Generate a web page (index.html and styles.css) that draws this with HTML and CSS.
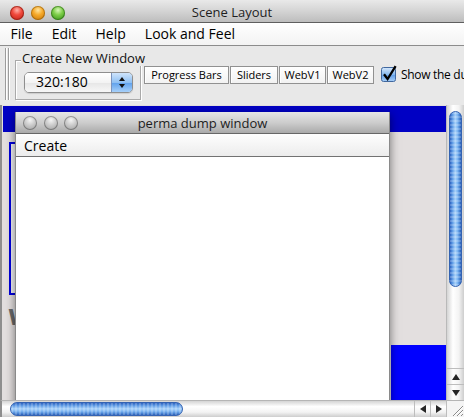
FILE: index.html
```html
<!DOCTYPE html>
<html>
<head>
<meta charset="utf-8">
<title>Scene Layout</title>
<link rel="stylesheet" href="styles.css">
</head>
<body>
<div class="app">
  <div class="titlebar">
    <div class="lights">
      <span class="light red"></span><span class="light yellow"></span><span class="light green"></span>
    </div>
    <div class="title">Scene Layout</div>
  </div>
  <div class="menubar">
    <span class="menu">File</span><span class="menu">Edit</span><span class="menu">Help</span><span class="menu">Look and Feel</span>
  </div>
  <div class="toolbar">
    <div class="grip"></div>
    <div class="group">
      <span class="group-title">Create New Window</span>
      <div class="combo">
        <span class="combo-text">320:180</span>
        <span class="combo-arrows"><span class="tri-up"></span><span class="tri-down"></span></span>
      </div>
    </div>
    <div class="buttons">
      <span class="btn b-progress">Progress Bars</span>
      <span class="btn b-sliders">Sliders</span>
      <span class="btn b-web">WebV1</span>
      <span class="btn b-web">WebV2</span>
    </div>
    <span class="check">
      <svg width="17" height="17" viewBox="0 0 17 17">
        <defs>
          <linearGradient id="cb" x1="0" y1="0" x2="0" y2="1">
            <stop offset="0" stop-color="#d7e8fb"/>
            <stop offset="0.5" stop-color="#86b9ef"/>
            <stop offset="0.51" stop-color="#5f9ce6"/>
            <stop offset="1" stop-color="#a9d0f8"/>
          </linearGradient>
        </defs>
        <rect x="0.5" y="2.5" width="14" height="14" rx="2" fill="url(#cb)" stroke="#41689f"/>
        <path d="M3 9.2 L6.6 14 L14.6 1.2" fill="none" stroke="#000" stroke-width="2.3" stroke-linejoin="miter"/>
      </svg>
    </span>
    <span class="check-label">Show the dump window</span>
  </div>
  <div class="desktop">
    <div class="viewport">
      <div class="edge"></div>
      <div class="bluebar"></div>
      <div class="blueframe"></div>
      <div class="ghost-w">W</div>
      <div class="blue-bottom"></div>
      <div class="perma">
        <div class="p-titlebar">
          <div class="p-lights"><span class="plight"></span><span class="plight"></span><span class="plight"></span></div>
          <div class="p-title">perma dump window</div>
        </div>
        <div class="p-menubar"><span class="p-menu">Create</span></div>
        <div class="p-content"></div>
      </div>
    </div>
    <div class="vscroll">
      <div class="vthumb"></div>
      <div class="vspace"></div>
      <div class="varrow"><span class="tri-up dark"></span></div>
      <div class="varrow"><span class="tri-down dark"></span></div>
    </div>
    <div class="hscroll">
      <div class="htrack"><div class="hthumb"></div></div>
      <div class="harrow"><span class="tri-left"></span></div>
      <div class="harrow"><span class="tri-right"></span></div>
    </div>
    <div class="corner">
      <svg width="18" height="17" viewBox="0 0 18 17">
        <path d="M6 16 L16 6 M10 16 L16 10 M14 16 L16 14" stroke="#8a8a8a" stroke-width="1"/>
        <path d="M7 16 L16 7 M11 16 L16 11" stroke="#fff" stroke-width="1"/>
      </svg>
    </div>
  </div>
</div>
</body>
</html>
```

FILE: styles.css
```css
* { box-sizing: border-box; margin: 0; padding: 0; }
html, body { width: 464px; height: 417px; overflow: hidden; }
body {
  font-family: "Open Sans", "DejaVu Sans", sans-serif;
  color: #000;
  background: #e8e8e8;
}
.app { display: flex; flex-direction: column; width: 464px; height: 417px; }

/* outer title bar */
.titlebar {
  height: 23px;
  flex: none;
  display: grid;
  border-bottom: 1px solid #5f5f5f;
  background: linear-gradient(#e9e9e9, #d4d4d4 50%, #bdbdbd);
}
.titlebar > * { grid-area: 1 / 1; }
.lights { display: flex; gap: 6.5px; padding: 6px 0 0 10px; align-self: start; }
.light { width: 14px; height: 14px; border-radius: 50%; }
.red { background: radial-gradient(circle at 50% 30%, #ffb0a8 0, #f0493c 40%, #b81d12 100%); box-shadow: inset 0 0 0 1px rgba(120,20,10,.55); }
.yellow { background: radial-gradient(circle at 50% 30%, #ffe6a0 0, #f6a92a 40%, #c57204 100%); box-shadow: inset 0 0 0 1px rgba(130,80,0,.5); }
.green { background: radial-gradient(circle at 50% 30%, #d8f8b8 0, #7ccd48 40%, #2f8a14 100%); box-shadow: inset 0 0 0 1px rgba(30,90,10,.5); }
.title { text-align: center; font-size: 13px; line-height: 21px; padding-top: 2px; color: #1e1e1e; }

/* menu bar */
.menubar {
  height: 23px;
  flex: none;
  padding-left: 1px;
  border-bottom: 1px solid #8c8c8c;
  background: linear-gradient(#ffffff, #f3f3f3);
  display: flex;
  white-space: nowrap;
}
.menu { font-size: 14px; line-height: 21px; padding: 0 9.5px; }

/* toolbar */
.toolbar {
  height: 59px;
  flex: none;
  display: flex;
  align-items: flex-start;
  white-space: nowrap;
  overflow: hidden;
  background: #e8e8e8;
}
.toolbar > * { flex: none; }
.grip {
  margin: 2px 0 0 5px;
  width: 5px;
  height: 52px;
  background: linear-gradient(to right, #9c9c9c 0 1px, #fff 1px 2px, transparent 2px 3px, #9c9c9c 3px 4px, #fff 4px 5px);
}
.group {
  position: relative;
  margin: 14px 0 0 5px;
  width: 126px;
  height: 40px;
  border: 1px solid #a9a9a9;
  box-shadow: inset 1px 1px 0 #fff, 1px 1px 0 #fff;
}
.group-title {
  position: absolute;
  top: -11px;
  left: 5px;
  padding: 0 1px;
  font-size: 13px;
  line-height: 16px;
  background: #e8e8e8;
  color: #111;
}
.combo {
  margin: 11px 0 0 8px;
  width: 109px;
  height: 21px;
  display: flex;
  border: 1px solid #8e8e8e;
  border-radius: 5px;
  overflow: hidden;
  box-shadow: 0 1px 1px rgba(0,0,0,.12);
}
.combo-text {
  flex: 1;
  padding-left: 11px;
  font-size: 14px;
  line-height: 16px;
  padding-top: 1px;
  background: linear-gradient(#ffffff, #f3f3f3 50%, #e6e6e6 52%, #f7f7f7);
}
.combo-arrows {
  width: 21px;
  flex: none;
  display: flex;
  flex-direction: column;
  align-items: center;
  justify-content: center;
  gap: 3px;
  border-left: 1px solid #7b93bd;
  background: linear-gradient(#cfe4fb, #8fc0f3 50%, #5fa1ec 52%, #a7d0fa);
}
.tri-up { width: 0; height: 0; border-left: 3px solid transparent; border-right: 3px solid transparent; border-bottom: 4px solid #111; }
.tri-down { width: 0; height: 0; border-left: 3px solid transparent; border-right: 3px solid transparent; border-top: 4px solid #111; }
.tri-up.dark { border-left-width: 4px; border-right-width: 4px; border-bottom-width: 6px; border-bottom-color: #262626; }
.tri-down.dark { border-left-width: 4px; border-right-width: 4px; border-top-width: 6px; border-top-color: #262626; }
.tri-left { width: 0; height: 0; border-top: 4px solid transparent; border-bottom: 4px solid transparent; border-right: 6px solid #262626; }
.tri-right { width: 0; height: 0; border-top: 4px solid transparent; border-bottom: 4px solid transparent; border-left: 6px solid #262626; }

.buttons { display: flex; gap: 1px; margin: 20px 0 0 3px; }
.btn {
  display: block;
  flex: none;
  height: 18px;
  font-size: 11px;
  line-height: 16px;
  text-align: center;
  border: 1px solid #919191;
  background: linear-gradient(#ffffff, #f2f2f2);
  box-shadow: inset 1px 1px 0 #fff;
}
.b-progress { width: 85px; }
.b-sliders { width: 48px; }
.b-web { width: 47px; }
.check { margin: 19px 0 0 7px; width: 17px; height: 17px; }
.check svg { display: block; }
.check-label { margin: 21px 0 0 3px; font-size: 12px; letter-spacing: -0.3px; line-height: 16px; }

/* desktop area */
.desktop {
  flex: 1;
  display: grid;
  grid-template-columns: 446px 18px;
  grid-template-rows: 295px 17px;
}
.viewport { position: relative; overflow: hidden; background: #e3dfdf; }
.edge { position: absolute; left: 0; top: 0; bottom: 0; width: 2px; background: #8e8e8e; }
.bluebar { position: absolute; left: 3px; top: 1px; right: 0; height: 26px; background: #0000c4; }
.blueframe {
  position: absolute;
  left: 9px; top: 37px;
  width: 60px; height: 153px;
  border: 2px solid #0000de;
  background: #f3f3f3;
}
.ghost-w {
  position: absolute;
  left: 8px; top: 202px;
  font: bold 22px/22px "DejaVu Sans", sans-serif;
  color: #6a6a6a;
}
.blue-bottom { position: absolute; left: 391px; top: 240px; right: 0; height: 55px; background: #0000ff; }

.perma {
  position: absolute;
  left: 15px; top: 7px;
  width: 375px; height: 320px;
  display: flex;
  flex-direction: column;
  background: #fff;
  border-left: 1px solid #8a8a8a;
  border-right: 1px solid #8a8a8a;
  box-shadow: 0 3px 9px rgba(0,0,0,.5);
}
.p-titlebar {
  height: 22px;
  flex: none;
  display: grid;
  border-bottom: 1px solid #676767;
  background: linear-gradient(#e6e6e6, #cdcdcd 50%, #aaaaaa);
}
.p-titlebar > * { grid-area: 1 / 1; }
.p-lights { display: flex; gap: 6.5px; padding: 4px 0 0 7px; align-self: start; }
.plight {
  width: 14px; height: 14px; border-radius: 50%;
  background: radial-gradient(circle at 50% 30%, #f4f4f4 0, #c9c9c9 45%, #9a9a9a 100%);
  box-shadow: inset 0 0 0 1px rgba(0,0,0,.3);
}
.p-title { text-align: center; font-size: 13px; line-height: 19px; padding-top: 2px; color: #1e1e1e; }
.p-menubar {
  height: 23px;
  flex: none;
  border-bottom: 1px solid #727272;
  background: linear-gradient(#fefefe, #ececec);
}
.p-menu { display: inline-block; font-size: 14px; line-height: 22px; padding-left: 8px; }
.p-content { flex: 1; background: #fff; }

/* scrollbars */
.vscroll {
  display: flex;
  flex-direction: column;
  border-left: 1px solid #b9b9b9;
  background: linear-gradient(to right, #d4d4d4, #ffffff 35%, #f3f3f3 70%, #cdcdcd);
}
.vthumb {
  flex: none;
  margin: 6px 0 0 2px;
  width: 13px;
  height: 176px;
  border-radius: 7px;
  border: 1px solid #3463b2;
  background:
    repeating-linear-gradient(to bottom, rgba(255,255,255,.2) 0 2px, rgba(255,255,255,0) 2px 4px),
    linear-gradient(to right, #2d62bf, #5d9ae5 22%, #a9d2fa 48%, #7db5f1 68%, #4a87d6 86%, #2c5fb6);
}
.vspace { flex: 1; }
.varrow {
  flex: none;
  height: 16px;
  display: flex;
  align-items: center;
  justify-content: center;
  border-top: 1px solid #bdbdbd;
}
.hscroll {
  display: flex;
  border-top: 1px solid #b5b5b5;
  border-left: 2px solid #8e8e8e;
  background: linear-gradient(#d4d4d4, #ffffff 35%, #f3f3f3 70%, #cdcdcd);
}
.htrack { flex: 1; }
.hthumb {
  margin: 1px 0 0 8px;
  width: 173px;
  height: 14px;
  border-radius: 7px;
  border: 1px solid #3463b2;
  background:
    repeating-linear-gradient(to right, rgba(255,255,255,.2) 0 2px, rgba(255,255,255,0) 2px 4px),
    linear-gradient(#2d62bf, #5d9ae5 22%, #a9d2fa 48%, #7db5f1 68%, #4a87d6 86%, #2c5fb6);
}
.harrow {
  flex: none;
  width: 16px;
  display: flex;
  align-items: center;
  justify-content: center;
  border-left: 1px solid #bdbdbd;
}
.corner {
  border-top: 1px solid #b5b5b5;
  border-left: 1px solid #bdbdbd;
  background: #f4f4f4;
}
.corner svg { display: block; margin-top: -1px; }
```
